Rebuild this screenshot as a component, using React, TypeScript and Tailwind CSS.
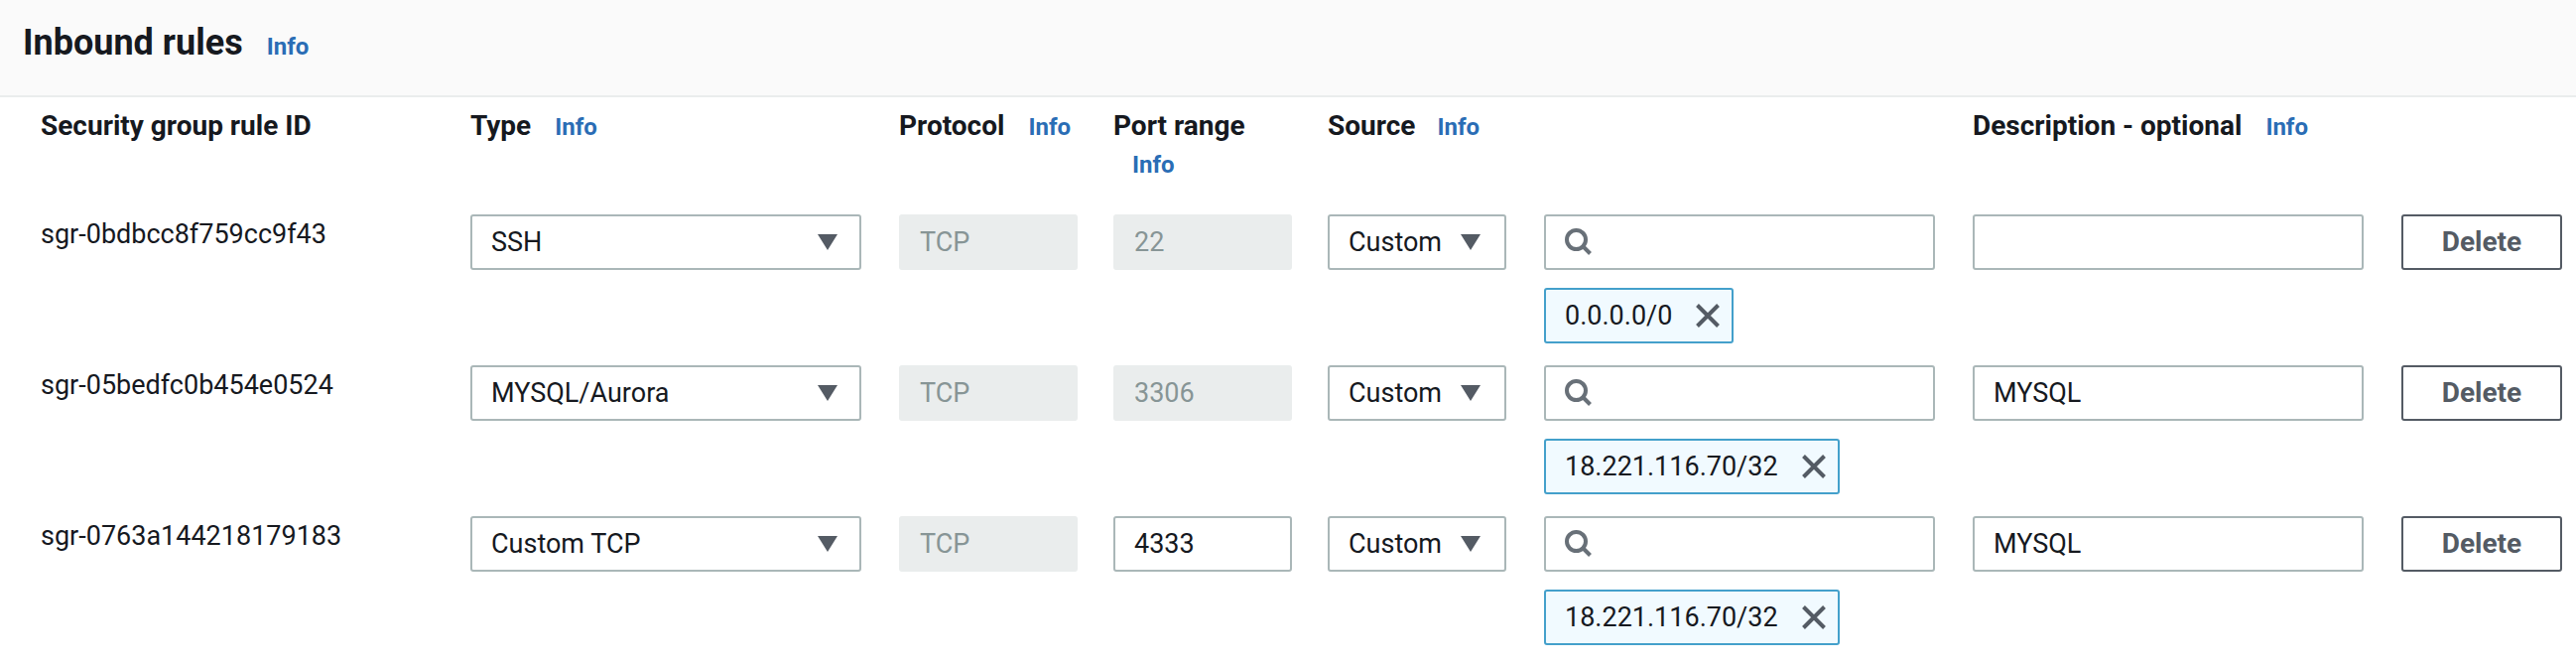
import { ReactNode } from "react";

const rules = [
  { id: "sgr-0bdbcc8f759cc9f43", type: "SSH", port: "22", portEditable: false, description: "", cidr: "0.0.0.0/0" },
  { id: "sgr-05bedfc0b454e0524", type: "MYSQL/Aurora", port: "3306", portEditable: false, description: "MYSQL", cidr: "18.221.116.70/32" },
  { id: "sgr-0763a144218179183", type: "Custom TCP", port: "4333", portEditable: true, description: "MYSQL", cidr: "18.221.116.70/32" },
];

const gridCols = "grid grid-cols-[394px_612px_394px_394px_162px] gap-x-[38px]";
const narrowCols = "grid grid-cols-3 gap-x-9";

const Info = ({ className = "" }: { className?: string }) => (
  <span className={`text-[24px] font-bold text-[#2a6db5] ${className}`}>Info</span>
);

const Label = ({ children }: { children: ReactNode }) => (
  <span className="text-[28px] font-bold text-[#16191f]">{children}</span>
);

const Caret = () => (
  <svg width="20" height="16" viewBox="0 0 20 16" className="shrink-0">
    <path d="M0 0h20L10 16z" fill="#545b64" />
  </svg>
);

const Box = ({ children, className = "" }: { children?: ReactNode; className?: string }) => (
  <div className={`flex h-14 items-center rounded-[3px] border-2 border-[#aab7b8] bg-white px-[19px] text-[27px] text-[#16191f] ${className}`}>
    {children}
  </div>
);

const Disabled = ({ children }: { children: ReactNode }) => (
  <div className="flex h-14 items-center rounded-[3px] bg-[#eaeded] px-[21px] text-[27px] text-[#879596]">{children}</div>
);

const Rule = ({ rule }: { rule: (typeof rules)[number] }) => (
  <div className="flex h-[152px] pl-[41px]">
    <div className="w-[433px] shrink-0 pt-[1px] text-[27px] leading-[38px] text-[#16191f]">{rule.id}</div>
    <div className={gridCols}>
      <Box className="justify-between pr-[22px]">
        {rule.type}
        <Caret />
      </Box>
      <div className={narrowCols}>
        <Disabled>TCP</Disabled>
        {rule.portEditable ? <Box>{rule.port}</Box> : <Disabled>{rule.port}</Disabled>}
        <Box className="justify-between pr-[24px]">
          Custom
          <Caret />
        </Box>
      </div>
      <div className="flex flex-col items-start gap-[18px]">
        <Box className="w-full">
          <svg width="27" height="27" viewBox="0 0 27 27" fill="none" stroke="#687078" strokeWidth="4" className="-mt-[2px]">
            <circle cx="11.5" cy="11.5" r="9.5" />
            <path d="M18.5 18.5l7 7" />
          </svg>
        </Box>
        <div className="flex h-14 items-center gap-[24px] rounded-[3px] border-2 border-[#44a0cb] bg-[#f1faff] pl-[19px] pr-3 text-[27px] text-[#16191f]">
          {rule.cidr}
          <svg width="24" height="24" viewBox="0 0 24 24" fill="none" stroke="#545b64" strokeWidth="4">
            <path d="M1.5 1.5l21 21M22.5 1.5l-21 21" />
          </svg>
        </div>
      </div>
      <Box>{rule.description}</Box>
      <div className="flex h-14 items-center justify-center rounded-[3px] border-2 border-[#545b64] bg-white text-[28px] font-bold text-[#545b64]">
        Delete
      </div>
    </div>
  </div>
);

export default function App() {
  return (
    <div className="h-[670px] w-[2596px] overflow-hidden bg-white font-['Roboto','Liberation_Sans',sans-serif]">
      <div className="flex h-[98px] items-baseline gap-[24px] border-b-2 border-[#eaeded] bg-[#fafafa] pl-[23px] pt-[18px]">
        <h2 className="text-[36px] font-bold leading-[50px] text-[#16191f]">Inbound rules</h2>
        <Info />
      </div>
      <div className="flex h-[118px] pl-[41px] pt-[10px] leading-[38px]">
        <div className="w-[433px] shrink-0">
          <Label>Security group rule ID</Label>
        </div>
        <div className={gridCols}>
          <div className="flex items-baseline gap-6">
            <Label>Type</Label>
            <Info />
          </div>
          <div className={narrowCols}>
            <div className="flex items-baseline gap-6">
              <Label>Protocol</Label>
              <Info />
            </div>
            <div>
              <Label>Port range</Label>
              <Info className="-mt-[3px] block pl-[19px]" />
            </div>
            <div className="flex items-baseline gap-[22px]">
              <Label>Source</Label>
              <Info />
            </div>
          </div>
          <div />
          <div className="flex items-baseline gap-6">
            <Label>Description - optional</Label>
            <Info />
          </div>
        </div>
      </div>
      {rules.map((rule) => (
        <Rule key={rule.id} rule={rule} />
      ))}
    </div>
  );
}
